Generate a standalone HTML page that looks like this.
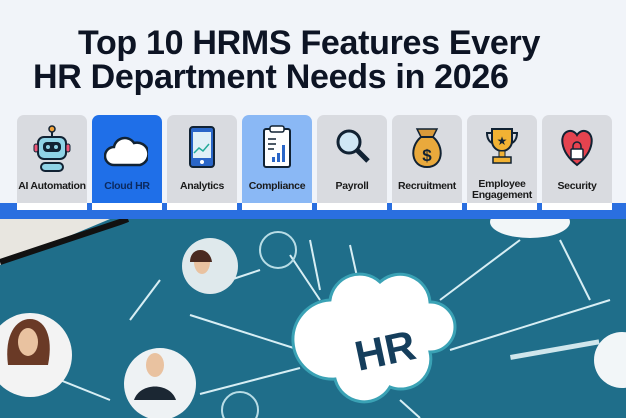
<!DOCTYPE html>
<html><head><meta charset="utf-8"><style>
*{margin:0;padding:0;box-sizing:border-box}
body{width:626px;height:418px;overflow:hidden;background:#f1f4f9;font-family:"Liberation Sans",sans-serif;position:relative}
.t{position:absolute;left:0;font-weight:bold;font-size:34px;color:#0d1424;white-space:nowrap;letter-spacing:-0.3px;line-height:36px}
.card{position:absolute;top:115px;width:70px;height:94px;background:#d9dbe0;border-radius:7px 7px 0 0}
.card .l{position:absolute;top:66px;left:-4px;right:-4px;text-align:center;font-size:10.5px;font-weight:bold;color:#1a1a1a;line-height:10px;letter-spacing:-0.3px}
.card svg{position:absolute;left:15px;top:10px}
.bar{position:absolute;top:203px;left:0;width:626px;height:16px;background:#2a6fe0}
.tab{position:absolute;top:203px;height:7px;width:70px;background:#fff}
.photo{position:absolute;top:219px;left:0;width:626px;height:199px;background:#1e6f8b;overflow:hidden}
</style></head><body>
<div class="t" style="top:25px;left:78px">Top 10 HRMS Features Every</div>
<div class="t" style="top:59px;left:33px">HR Department Needs in 2026</div>

<div class="bar"></div>
<div class="card" style="left:17px"><svg width="40" height="52" viewBox="0 0 40 52"><circle cx="20" cy="4" r="3" fill="#f2a33a" stroke="#123" stroke-width="1.5"/><line x1="20" y1="7" x2="20" y2="12" stroke="#123" stroke-width="2"/><rect x="6" y="12" width="28" height="22" rx="6" fill="#8fd3e6" stroke="#123" stroke-width="2"/><rect x="11" y="17" width="18" height="10" rx="4" fill="#123"/><circle cx="16" cy="22" r="2" fill="#8fd3e6"/><circle cx="24" cy="22" r="2" fill="#8fd3e6"/><rect x="2" y="19" width="4" height="8" rx="2" fill="#e57" stroke="#123"/><rect x="34" y="19" width="4" height="8" rx="2" fill="#e57" stroke="#123"/><rect x="9" y="38" width="22" height="8" rx="4" fill="#8fd3e6" stroke="#123" stroke-width="2"/></svg><div class="l">AI Automation</div></div>
<div class="card" style="left:92px;background:#1f6fe8"><svg width="44" height="52" viewBox="0 0 40 52" style="left:12px"><path d="M8 40 a9 9 0 0 1 0-18 a11 11 0 0 1 20-4 a10 10 0 0 1 6 22z" fill="#fff" stroke="#123" stroke-width="2.5"/></svg><div class="l" style="color:#0b2a60">Cloud HR</div></div>
<div class="card" style="left:167px"><svg width="40" height="52" viewBox="0 0 40 52"><rect x="8" y="2" width="24" height="40" rx="3" fill="#2a66c8" stroke="#123" stroke-width="2"/><rect x="11" y="7" width="18" height="26" fill="#dff0f7"/><path d="M12 28 l5-5 4 3 6-7" stroke="#2a9" stroke-width="1.5" fill="none"/><circle cx="20" cy="37" r="2" fill="#fff"/></svg><div class="l">Analytics</div></div>
<div class="card" style="left:242px;background:#8ab8f5"><svg width="40" height="52" viewBox="0 0 40 52"><rect x="7" y="4" width="26" height="38" rx="2" fill="#fff" stroke="#123" stroke-width="2"/><rect x="13" y="1" width="14" height="6" rx="2" fill="#fff" stroke="#123" stroke-width="1.5"/><rect x="20" y="28" width="3" height="9" fill="#2a66c8"/><rect x="25" y="20" width="3" height="17" fill="#2a66c8"/><rect x="15" y="32" width="3" height="5" fill="#2a66c8"/><path d="M11 14h8M11 19h8M11 24h6" stroke="#123" stroke-width="1.5"/></svg><div class="l">Compliance</div></div>
<div class="card" style="left:317px"><svg width="40" height="52" viewBox="0 0 40 52"><circle cx="17" cy="17" r="11" fill="#cfe7f5" stroke="#123" stroke-width="3"/><line x1="25" y1="25" x2="36" y2="36" stroke="#123" stroke-width="5"/></svg><div class="l">Payroll</div></div>
<div class="card" style="left:392px"><svg width="40" height="52" viewBox="0 0 40 52"><path d="M14 12 L10 4 h20 l-4 8z" fill="#d99a3a" stroke="#123" stroke-width="1.5"/><path d="M14 12 C2 22 4 42 20 42 C36 42 38 22 26 12z" fill="#e9a93c" stroke="#123" stroke-width="2"/><text x="20" y="36" font-size="17" font-weight="bold" text-anchor="middle" fill="#123" font-family="Liberation Sans">$</text></svg><div class="l">Recruitment</div></div>
<div class="card" style="left:467px"><svg width="40" height="52" viewBox="0 0 40 52"><path d="M10 4h20v12a10 10 0 0 1-20 0z" fill="#f2b233" stroke="#123" stroke-width="2"/><path d="M10 8h-5c0 8 5 10 5 10M30 8h5c0 8-5 10-5 10" fill="none" stroke="#123" stroke-width="2"/><rect x="17" y="26" width="6" height="6" fill="#f2b233" stroke="#123"/><rect x="11" y="32" width="18" height="6" fill="#f2b233" stroke="#123" stroke-width="1.5"/><text x="20" y="20" font-size="12" text-anchor="middle" fill="#123">★</text></svg><div class="l" style="top:64px;line-height:11px">Employee<br>Engagement</div></div>
<div class="card" style="left:542px"><svg width="40" height="52" viewBox="0 0 40 52"><path d="M20 40 C2 26 2 8 12 6 C17 5 20 10 20 10 C20 10 23 5 28 6 C38 8 38 26 20 40z" fill="#e5434f" stroke="#123" stroke-width="2"/><rect x="14" y="24" width="12" height="10" rx="1" fill="#fff" stroke="#123" stroke-width="1.5"/><path d="M16 24v-3a4 4 0 0 1 8 0v3" fill="none" stroke="#123" stroke-width="1.5"/></svg><div class="l">Security</div></div>
<div class="tab" style="left:17px"></div><div class="tab" style="left:92px"></div><div class="tab" style="left:167px"></div><div class="tab" style="left:242px"></div><div class="tab" style="left:317px"></div><div class="tab" style="left:392px"></div><div class="tab" style="left:467px"></div><div class="tab" style="left:542px"></div>

<div class="photo">
<svg width="626" height="199" viewBox="0 219 626 199">
<rect x="0" y="219" width="626" height="199" fill="#1f6e8a"/>
<path d="M0 219 L110 219 L0 265z" fill="#e8e6e0"/>
<path d="M0 262 L120 222 L128 219" stroke="#111" stroke-width="6" fill="none"/>
<g stroke="#d7eef4" stroke-width="2" fill="none">
<line x1="190" y1="315" x2="300" y2="350"/><line x1="200" y1="394" x2="300" y2="368"/>
<line x1="290" y1="255" x2="320" y2="300"/><line x1="310" y1="240" x2="320" y2="290"/>
<line x1="350" y1="245" x2="360" y2="290"/><line x1="440" y1="300" x2="520" y2="240"/>
<line x1="450" y1="350" x2="610" y2="300"/><line x1="560" y1="240" x2="590" y2="300"/>
<line x1="60" y1="380" x2="110" y2="400"/><line x1="230" y1="280" x2="260" y2="270"/>
<line x1="130" y1="320" x2="160" y2="280"/><line x1="400" y1="400" x2="420" y2="418"/>
</g>
<path d="M330 300 a30 30 0 0 1 50-18 a30 30 0 0 1 50 20 a25 25 0 0 1 0 50 a30 30 0 0 1-40 35 a30 30 0 0 1-55-8 a28 28 0 0 1-5-79z" fill="#fff" stroke="#3aa2b5" stroke-width="3"/>
<text x="385" y="365" font-size="42" font-weight="bold" fill="#153e5c" text-anchor="middle" font-family="Liberation Sans" transform="rotate(-12 385 350)">HR</text>
<circle cx="30" cy="355" r="42" fill="#f3f3f3"/>
<path d="M8 365 c-4-30 8-46 22-46 c14 0 24 16 18 46z" fill="#6a3a26"/>
<ellipse cx="28" cy="342" rx="10" ry="14" fill="#e9c2a0"/>
<circle cx="210" cy="266" r="28" fill="#dfe9ec"/><ellipse cx="202" cy="262" rx="8" ry="12" fill="#e9c2a0"/><path d="M190 262 c0-16 20-16 22 0" fill="#4a2a20"/>
<circle cx="160" cy="384" r="36" fill="#eef2f4"/><ellipse cx="155" cy="365" rx="9" ry="12" fill="#e9c2a0"/><path d="M134 400 c6-18 36-18 42 0z" fill="#1b2733"/>
<circle cx="622" cy="360" r="28" fill="#f2f6f8"/>
<ellipse cx="530" cy="222" rx="40" ry="16" fill="#f2f6f8"/>
<circle cx="278" cy="250" r="18" fill="none" stroke="#b8dde6" stroke-width="2"/>
<circle cx="240" cy="410" r="18" fill="none" stroke="#b8dde6" stroke-width="2"/>
<rect x="510" y="355" width="90" height="5" fill="#cfe6ec" transform="rotate(-10 510 355)"/>
</svg>
</div>
</body></html>
